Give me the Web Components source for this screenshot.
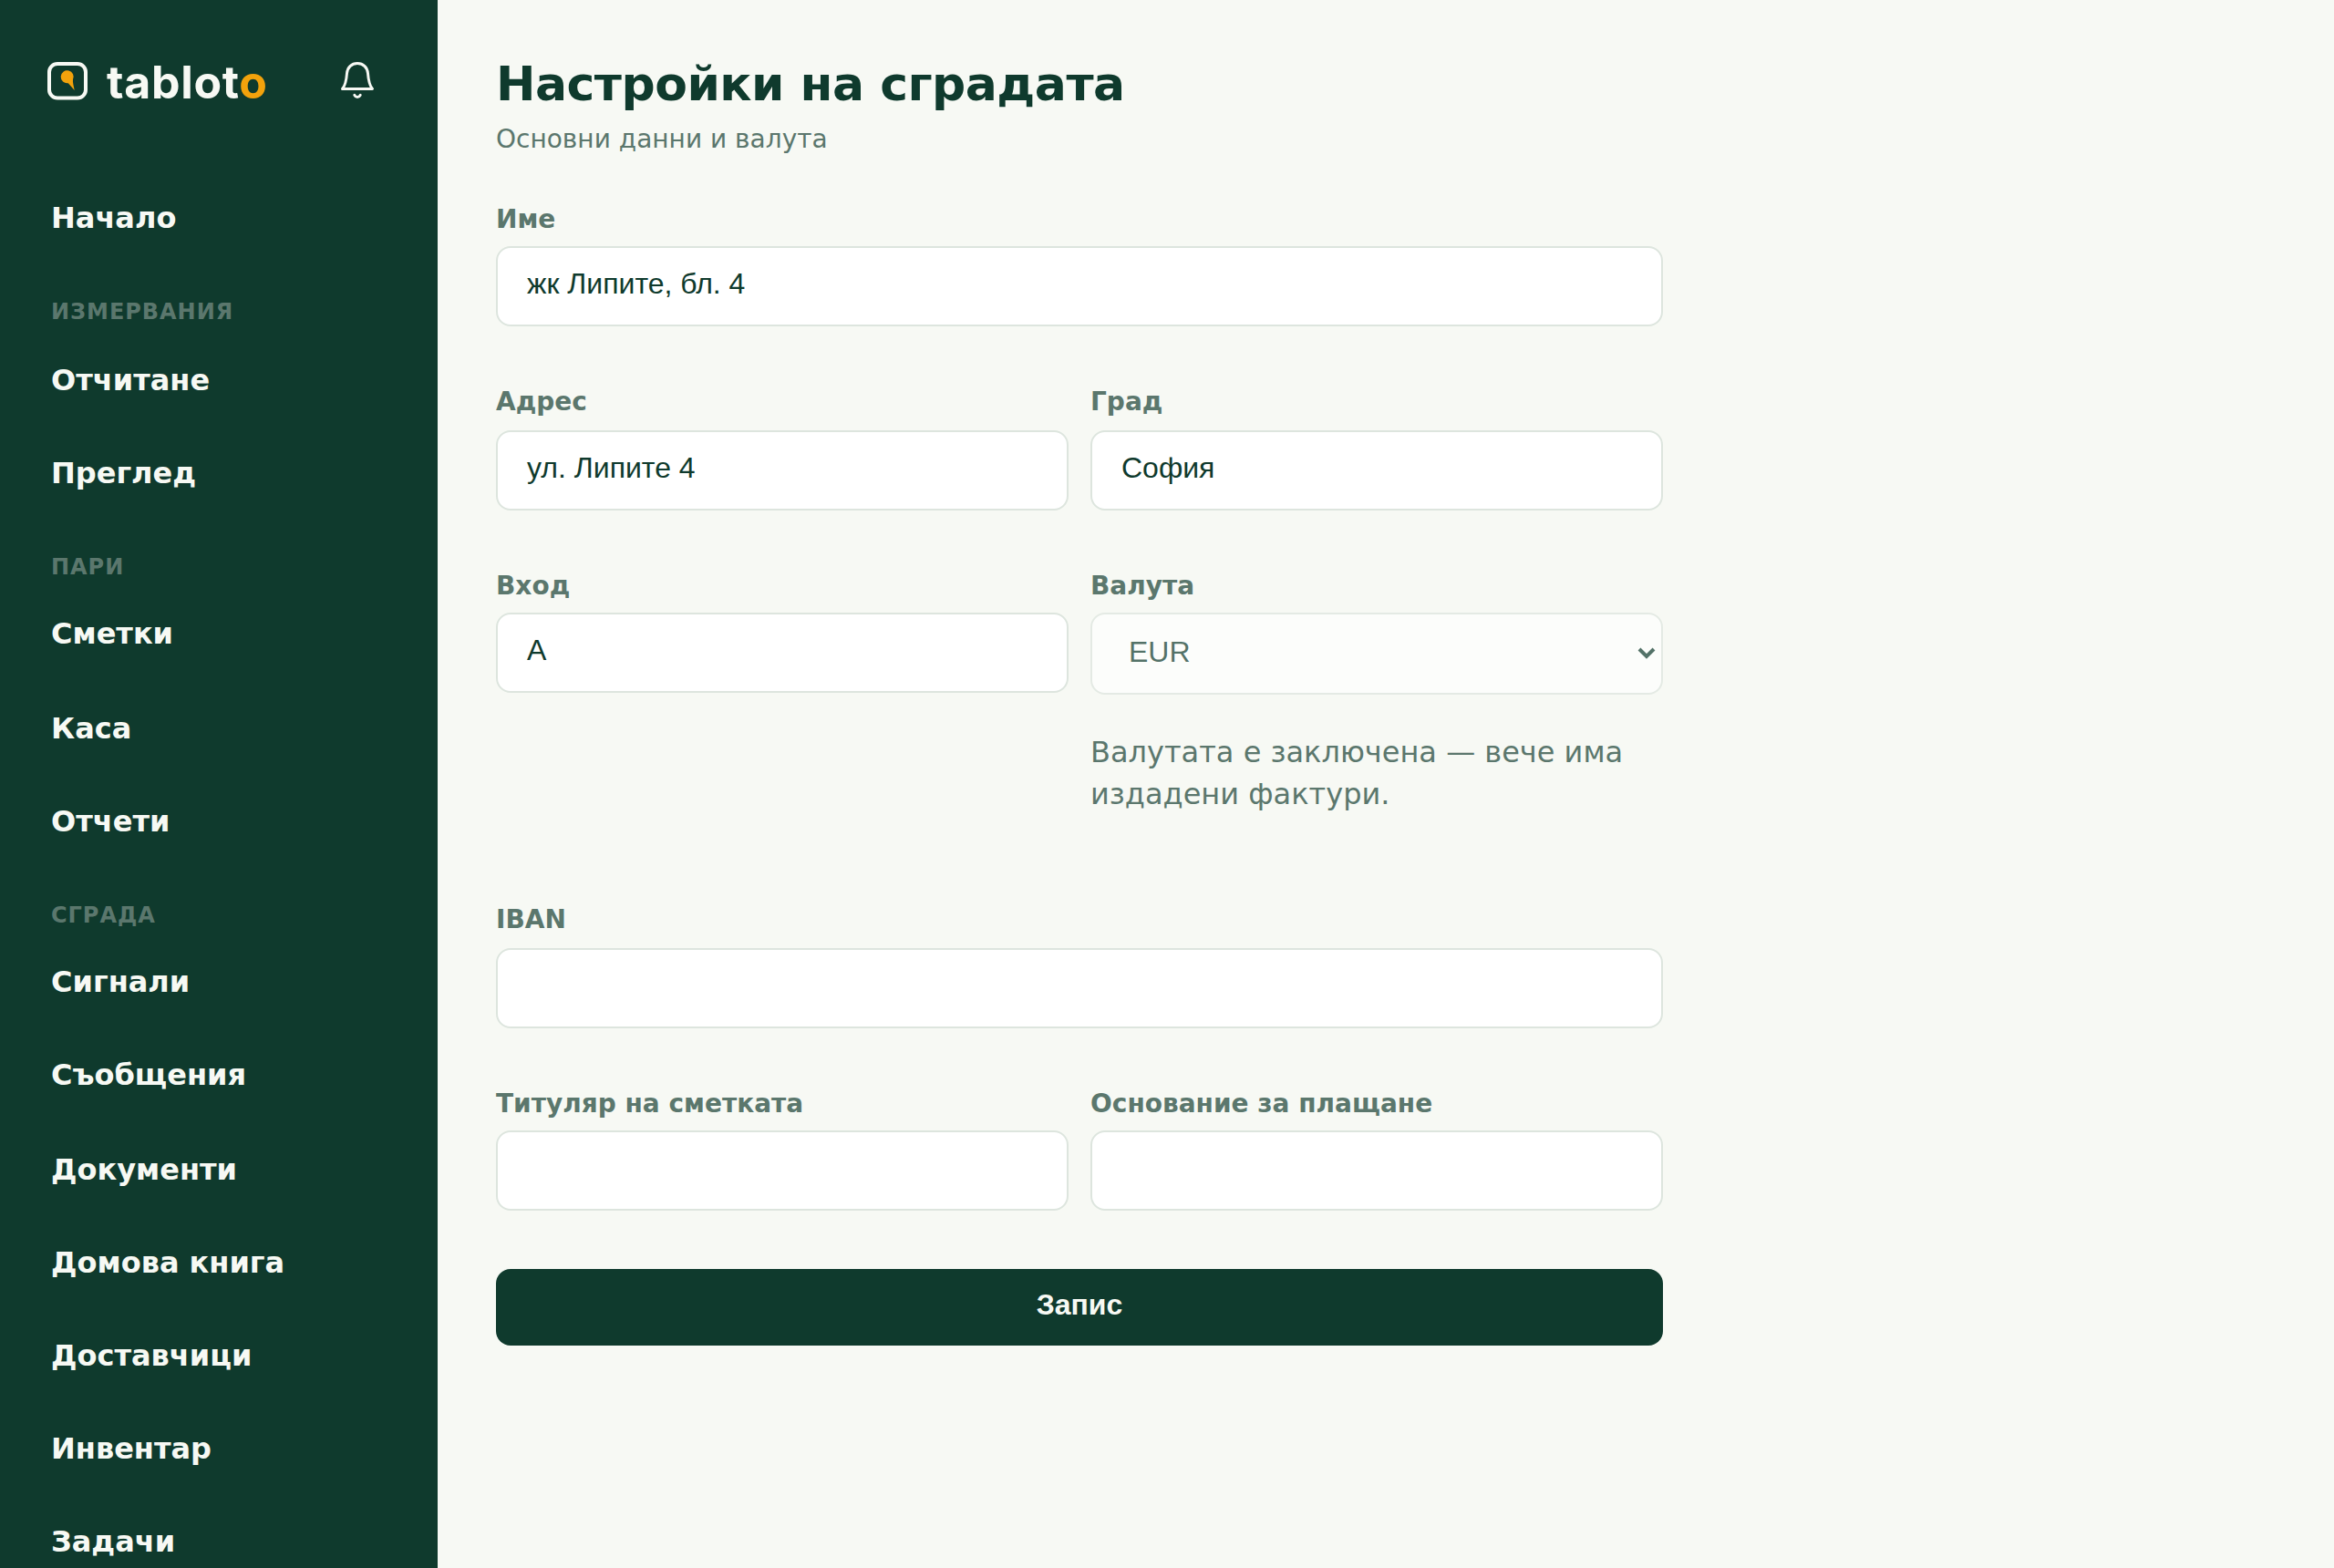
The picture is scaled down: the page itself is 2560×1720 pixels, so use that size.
<!DOCTYPE html>
<html lang="bg">
<head>
<meta charset="utf-8">
<title>tabloto</title>
<style>
  :root {
    --green: #0f3a2d;
    --paper: #f7f9f4;
    --muted: #5b776d;
    --line: #dde5de;
    --amber: #f2a20c;
  }
  body {
    margin: 0;
    height: 1720px;
    overflow: hidden;
    background: var(--paper);
    color: var(--green);
    font: 32px/46px "DejaVu Sans", sans-serif;
  }
</style>
</head>
<body>
<app-shell>
  <side-bar slot="side">
    <nav-item>Начало</nav-item>
    <nav-group roomy>Измервания</nav-group>
    <nav-item>Отчитане</nav-item>
    <nav-item>Преглед</nav-item>
    <nav-group>Пари</nav-group>
    <nav-item roomy>Сметки</nav-item>
    <nav-item>Каса</nav-item>
    <nav-item>Отчети</nav-item>
    <nav-group>Сграда</nav-group>
    <nav-item>Сигнали</nav-item>
    <nav-item roomy>Съобщения</nav-item>
    <nav-item>Документи</nav-item>
    <nav-item>Домова книга</nav-item>
    <nav-item>Доставчици</nav-item>
    <nav-item>Инвентар</nav-item>
    <nav-item>Задачи</nav-item>
  </side-bar>
  <page-header>
    Настройки на сградата
    <span slot="sub">Основни данни и валута</span>
  </page-header>
  <settings-form>
    <form-field label="Име" value="жк Липите, бл. 4" wide></form-field>
    <form-field label="Адрес" value="ул. Липите 4" roomy></form-field>
    <form-field label="Град" value="София" roomy></form-field>
    <form-field label="Вход" value="А"></form-field>
    <form-field label="Валута" value="EUR" type="select">Валутата е заключена — вече има издадени фактури.</form-field>
    <form-field label="IBAN" wide roomy></form-field>
    <form-field label="Титуляр на сметката"></form-field>
    <form-field label="Основание за плащане"></form-field>
    <save-button>Запис</save-button>
  </settings-form>
</app-shell>

<script>
class AppShell extends HTMLElement {
  constructor() {
    super();
    this.attachShadow({ mode: "open" });
    this.shadowRoot.innerHTML = `
      <style>
        :host {
          display: grid;
          grid-template-columns: 480px 1fr;
          height: 100%;
        }
        main {
          padding: 56px 64px;
        }
      </style>
      <slot name="side"></slot>
      <main><slot></slot></main>
    `;
  }
}

class BrandLogo extends HTMLElement {
  constructor() {
    super();
    this.attachShadow({ mode: "open" });
    this.shadowRoot.innerHTML = `
      <style>
        :host {
          display: flex;
          align-items: center;
          gap: 19px;
          color: var(--paper);
          font: 700 50px/60px Inter, sans-serif;
          letter-spacing: 0.7px;
        }
        svg { display: block; }
        span { padding-top: 4px; }
        b { font-weight: inherit; color: var(--amber); }
      </style>
      <svg width="50" height="48" viewBox="0 0 50 48">
        <rect x="6" y="6" width="40" height="37.5" rx="9" fill="none" stroke="currentColor" stroke-width="4"/>
        <path d="M32 23.300C31.500 26.500 33 31 33.700 35L26.800 27.200A7 7 0 1 1 32 23.300Z" fill="#f2a20c"/>
      </svg>
      <span>tablot<b>o</b></span>
    `;
  }
}

class BellButton extends HTMLElement {
  constructor() {
    super();
    this.attachShadow({ mode: "open" });
    this.shadowRoot.innerHTML = `
      <style>
        :host { display: block; color: var(--paper); }
        svg { display: block; }
      </style>
      <svg width="44" height="44" viewBox="0 0 44 44" fill="none" stroke="currentColor" stroke-width="3" stroke-linecap="round" stroke-linejoin="round">
        <path d="M5.500 31.500C9.500 27 10 21 10.500 14.500 11 8 15.500 3.500 22 3.500S33 8 33.500 14.500C34 21 34.500 27 38.500 31.500Z"/>
        <path d="M18.800 38.300C20.200 41.100 23.800 41.100 25.200 38.300"/>
      </svg>
    `;
  }
}

class SideBar extends HTMLElement {
  constructor() {
    super();
    this.attachShadow({ mode: "open" });
    this.shadowRoot.innerHTML = `
      <style>
        :host {
          display: block;
          height: 1720px;
          box-sizing: border-box;
          overflow: hidden;
          padding: 48px 24px 0;
          background: var(--green);
        }
        header {
          display: flex;
          align-items: center;
          justify-content: space-between;
          height: 80px;
          padding: 0 42px 0 24px;
          margin-bottom: 60px;
        }
      </style>
      <header>
        <brand-logo></brand-logo>
        <bell-button></bell-button>
      </header>
      <nav><slot></slot></nav>
    `;
  }
}

class NavItem extends HTMLElement {
  constructor() {
    super();
    this.attachShadow({ mode: "open" });
    this.shadowRoot.innerHTML = `
      <style>
        :host {
          display: block;
          padding: 28px 32px;
          color: var(--paper);
          font-weight: 700;
        }
        :host([roomy]) { padding-bottom: 30px; }
      </style>
      <slot></slot>
    `;
  }
}

class NavGroup extends HTMLElement {
  constructor() {
    super();
    this.attachShadow({ mode: "open" });
    this.shadowRoot.innerHTML = `
      <style>
        :host {
          display: block;
          padding: 35px 32px 5px;
          color: var(--muted);
          font-size: 24px;
          line-height: 34px;
          font-weight: 700;
          letter-spacing: 0.96px;
          text-transform: uppercase;
        }
        :host([roomy]) { padding-bottom: 7px; }
      </style>
      <slot></slot>
    `;
  }
}

class PageHeader extends HTMLElement {
  constructor() {
    super();
    this.attachShadow({ mode: "open" });
    this.shadowRoot.innerHTML = `
      <style>
        :host { display: block; margin-bottom: 48px; }
        h1 {
          margin: 0;
          font-size: 52px;
          line-height: 72px;
          font-weight: 700;
          letter-spacing: -0.52px;
        }
        p {
          margin: 5px 0 0;
          color: var(--muted);
          font-size: 28px;
          line-height: 40px;
        }
      </style>
      <h1><slot></slot></h1>
      <p><slot name="sub"></slot></p>
    `;
  }
}

class SettingsForm extends HTMLElement {
  constructor() {
    super();
    this.attachShadow({ mode: "open" });
    this.shadowRoot.innerHTML = `
      <style>
        :host {
          display: grid;
          grid-template-columns: 1fr 1fr;
          column-gap: 24px;
          width: 1280px;
        }
      </style>
      <slot></slot>
    `;
  }
}

class FormField extends HTMLElement {
  constructor() {
    super();
    this.attachShadow({ mode: "open" });
  }

  connectedCallback() {
    const isSelect = this.getAttribute("type") === "select";
    const value = this.getAttribute("value") || "";
    this.shadowRoot.innerHTML = `
      <style>
        :host { display: block; padding-bottom: 63px; }
        :host([wide]) { grid-column: 1 / -1; }
        label {
          display: block;
          margin-bottom: 9px;
          color: var(--muted);
          font-size: 28px;
          line-height: 40px;
          font-weight: 700;
        }
        :host([roomy]) label { margin-bottom: 11px; }
        .box {
          display: flex;
          justify-content: space-between;
          box-sizing: border-box;
          height: 88px;
          padding: 21px 32px;
          border: 2px solid var(--line);
          border-radius: 16px;
          background: #fff;
          font: 32px/37px "Liberation Sans", sans-serif;
        }
        .select {
          height: 90px;
          padding: 23px 6px 23px 40px;
          opacity: 0.7;
        }
        .select svg { margin-top: 9px; }
        p { margin: 40px 0 32px; color: var(--muted); }
      </style>
      <label>${this.getAttribute("label")}</label>
      <div class="box ${isSelect ? "select" : ""}">
        <span>${value}</span>
        ${isSelect ? `<svg width="20" height="20" viewBox="0 0 20 20" fill="none" stroke="currentColor" stroke-width="4"><path d="M2 6l8 8 8-8"/></svg>` : ""}
      </div>
      ${isSelect ? "<p><slot></slot></p>" : ""}
    `;
  }
}

class SaveButton extends HTMLElement {
  constructor() {
    super();
    this.attachShadow({ mode: "open" });
    this.shadowRoot.innerHTML = `
      <style>
        :host { display: block; grid-column: 1 / -1; margin-top: 1px; }
        button {
          display: block;
          width: 100%;
          height: 84px;
          padding: 0 0 5px;
          border: 0;
          border-radius: 16px;
          background: var(--green);
          color: var(--paper);
          font: 700 32px/37px "Liberation Sans", sans-serif;
        }
      </style>
      <button type="button"><slot></slot></button>
    `;
  }
}

customElements.define("app-shell", AppShell);
customElements.define("brand-logo", BrandLogo);
customElements.define("bell-button", BellButton);
customElements.define("side-bar", SideBar);
customElements.define("nav-item", NavItem);
customElements.define("nav-group", NavGroup);
customElements.define("page-header", PageHeader);
customElements.define("settings-form", SettingsForm);
customElements.define("form-field", FormField);
customElements.define("save-button", SaveButton);
</script>
</body>
</html>
